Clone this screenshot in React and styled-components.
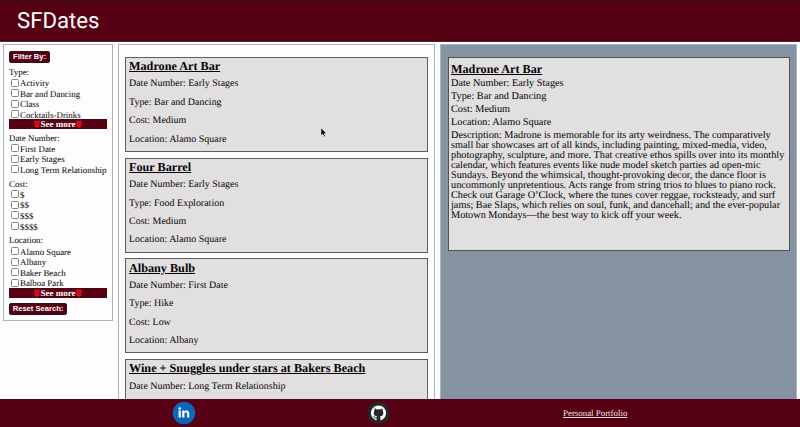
import React from "react";
import styled, { createGlobalStyle } from "styled-components";

const maroon = "#560013";

const GlobalStyle = createGlobalStyle`
  * { box-sizing: border-box; }
  body {
    margin: 0;
    overflow: hidden;
    background: #fdfdfd;
    color: #050304;
    font-family: "Liberation Serif", "Times New Roman", serif;
    text-rendering: geometricPrecision;
  }
`;

const Page = styled.div`
  display: flex;
  flex-direction: column;
  height: 427px;
  overflow: hidden;
`;

const Header = styled.header`
  flex: 0 0 42px;
  padding: 8px 17px 0;
  border-top: 1px solid #2b1820;
  border-bottom: 1px solid #4e2730;
  background: ${maroon};
`;

const Brand = styled.h1`
  margin: 0;
  color: #fff;
  font: 400 22.2px/24px Roboto, sans-serif;
`;

const Main = styled.main`
  flex: 1;
  min-height: 0;
  display: grid;
  grid-template-columns: 110px 317px 357px;
  column-gap: 5px;
  padding: 2px 3px 0;
`;

const Sidebar = styled.aside`
  align-self: start;
  height: 277px;
  padding: 6px 5px;
  border: 1px solid #a9b4c2;
`;

const FilterButton = styled.button`
  display: block;
  width: ${(p) => p.$width}px;
  height: 12px;
  padding: 0;
  border: 1px solid #35121c;
  border-radius: 2px;
  background: ${maroon};
  color: #fff;
  font: 700 7.6px/10px "Liberation Sans", Arial, sans-serif;
  white-space: nowrap;
`;

const Group = styled.section`
  margin-top: ${(p) => p.$gap}px;
  font-size: 8.88px;
`;

const GroupTitle = styled.div`
  height: 10px;
  line-height: 9px;
`;

const Option = styled.label`
  display: flex;
  align-items: center;
  height: 10.55px;
  padding-left: 2px;
  line-height: 10px;
  white-space: nowrap;
`;

const Checkbox = styled.input`
  appearance: none;
  flex: none;
  width: 8px;
  height: 8px;
  margin: 0 1px 1px 0;
  border: 1px solid #858585;
  border-radius: 1.5px;
  background: #fff;
`;

const SeeMore = styled.div`
  display: flex;
  align-items: center;
  justify-content: center;
  width: 98px;
  height: 10px;
  margin-top: -1px;
  background: ${maroon};
  color: #fff;
  font-weight: 700;
  font-size: 9px;
  line-height: 10px;
`;

const List = styled.section`
  display: flex;
  flex-direction: column;
  gap: 5.7px;
  min-height: 0;
  overflow: hidden;
  padding: 12px 6px 0;
  border: 1px solid #a9b4c2;
  border-bottom: 0;
`;

const Card = styled.article`
  flex: 0 0 95px;
  padding: 1.4px 3px;
  border: 1px solid #5e5e60;
  background: #e1dfe0;
`;

const Title = styled.h2`
  margin: 0;
  font-size: 12.2px;
  line-height: 14px;
  text-decoration: underline;
  text-decoration-thickness: 1px;
  white-space: nowrap;
`;

const Facts = styled.div`
  padding-top: ${(p) => p.$top}px;
  font-size: ${(p) => p.$size}px;
  line-height: ${(p) => p.$line}px;
`;

const DetailPanel = styled.section`
  padding: 12px 6px 0 7px;
  border: 1px solid #a9b4c2;
  border-bottom: 0;
  background: #8592a2;
`;

const Detail = styled.article`
  height: 194px;
  padding: 4.4px 2px;
  border: 1px solid #4f535a;
  background: #e1dfe0;
`;

const Description = styled.p`
  margin: 1px 0 0;
  font-size: 10.27px;
  line-height: 10.05px;
  white-space: pre;
`;

const Footer = styled.footer`
  flex: 0 0 28px;
  display: grid;
  grid-template-columns: 366px 25px 172px 1fr;
  align-items: center;
  background: ${maroon};
`;

const LinkedInLink = styled.a`
  display: block;
  padding-left: 172px;
  height: 24px;
`;

const GitHubLink = styled.a`
  display: block;
  height: 24px;
`;

const PortfolioLink = styled.a`
  grid-column: 4;
  color: #efe2e5;
  font-size: 8.9px;
  line-height: 12px;
`;

const Pointer = styled.svg`
  position: absolute;
  left: 320px;
  top: 127px;
`;

const Chevrons = () => (
  <svg width="6" height="8" viewBox="0 0 6 8" fill="none" stroke="#f01118" strokeWidth="1.5">
    <path d="M.3 .8 3 2.5 5.7.8M.3 3.1 3 4.8 5.7 3.1M.7 5.3 3 7 5.3 5.3" />
  </svg>
);

const groups = [
  { title: "Type:", gap: 5, options: ["Activity", "Bar and Dancing", "Class", "Cocktails-Drinks"], more: true },
  { title: "Date Number:", gap: 4.4, options: ["First Date", "Early Stages", "Long Term Relationship"] },
  { title: "Cost:", gap: 4.4, options: ["$", "$$", "$$$", "$$$$"] },
  { title: "Location:", gap: 4.6, options: ["Alamo Square", "Albany", "Baker Beach", "Balboa Park"], more: true },
];

const dates = [
  { name: "Madrone Art Bar", stage: "Early Stages", type: "Bar and Dancing", cost: "Medium", place: "Alamo Square" },
  { name: "Four Barrel", stage: "Early Stages", type: "Food Exploration", cost: "Medium", place: "Alamo Square" },
  { name: "Albany Bulb", stage: "First Date", type: "Hike", cost: "Low", place: "Albany" },
  { name: "Wine + Snuggles under stars at Bakers Beach", stage: "Long Term Relationship" },
];

const description = `Description: Madrone is memorable for its arty weirdness. The comparatively
small bar showcases art of all kinds, including painting, mixed-media, video,
photography, sculpture, and more. That creative ethos spills over into its monthly
calendar, which features events like nude model sketch parties ad open-mic
Sundays. Beyond the whimsical, thought-provoking decor, the dance floor is
uncommonly unpretentious. Acts range from string trios to blues to piano rock.
Check out Garage O’Clock, where the tunes cover reggae, rocksteady, and surf
jams; Bae Slaps, which relies on soul, funk, and dancehall; and the ever-popular
Motown Mondays—the best way to kick off your week.`;

function DateFacts({ date, ...layout }) {
  return (
    <Facts {...layout}>
      <div>Date Number: {date.stage}</div>
      {date.type && <div>Type: {date.type}</div>}
      {date.cost && <div>Cost: {date.cost}</div>}
      {date.place && <div>Location: {date.place}</div>}
    </Facts>
  );
}

export default function App() {
  return (
    <Page>
      <GlobalStyle />
      <Header><Brand>SFDates</Brand></Header>
      <Main>
        <Sidebar>
          <FilterButton $width={41}>Filter By:</FilterButton>
          {groups.map((g) => (
            <Group key={g.title} $gap={g.gap}>
              <GroupTitle>{g.title}</GroupTitle>
              {g.options.map((o) => (
                <Option key={o}><Checkbox type="checkbox" />{o}</Option>
              ))}
              {g.more && <SeeMore><Chevrons />See more<Chevrons /></SeeMore>}
            </Group>
          ))}
          <Group $gap={5}><FilterButton $width={58}>Reset Search:</FilterButton></Group>
        </Sidebar>
        <List>
          {dates.map((d) => (
            <Card key={d.name}>
              <Title>{d.name}</Title>
              <DateFacts date={d} $top={2.1} $size={9.97} $line={18.35} />
            </Card>
          ))}
        </List>
        <DetailPanel>
          <Detail>
            <Title>{dates[0].name}</Title>
            <DateFacts date={dates[0]} $top={2} $size={10.27} $line={12.8} />
            <Description>{description}</Description>
          </Detail>
        </DetailPanel>
      </Main>
      <Footer>
        <LinkedInLink href="#" aria-label="LinkedIn">
          <svg width="24" height="24" viewBox="0 0 24 24">
            <circle cx="12" cy="12" r="11.2" fill="#0b66bc" />
            <g fill="#fff">
              <circle cx="7.7" cy="7.5" r="1.3" />
              <path d="M6.6 9.6h2.2v6.8H6.6zM10.2 9.6h2.1v1c.4-.7 1.1-1.2 2.2-1.2 2 0 2.8 1.3 2.8 3.3v3.7h-2.2v-3.4c0-1-.3-1.7-1.2-1.7-1 0-1.5.7-1.5 1.8v3.3h-2.2z" />
            </g>
          </svg>
        </LinkedInLink>
        <GitHubLink href="#" aria-label="GitHub">
          <svg width="24" height="24" viewBox="0 0 24 24">
            <circle cx="12.5" cy="12" r="11" fill="#25272a" />
            <g transform="translate(5 4.5) scale(.94)">
              <path fill="#fff" d="M8 0C3.58 0 0 3.58 0 8c0 3.54 2.29 6.53 5.47 7.59.4.07.55-.17.55-.38v-1.49c-2.01.37-2.53-.49-2.69-.94-.09-.23-.48-.94-.82-1.13-.28-.15-.68-.52-.01-.53.63-.01 1.08.58 1.23.82.72 1.21 1.87.87 2.33.66.07-.52.28-.87.51-1.07-1.78-.2-3.64-.89-3.64-3.95 0-.87.31-1.59.82-2.15-.08-.2-.36-1.02.08-2.12 0 0 .67-.21 2.2.82A7.65 7.65 0 0 1 8 3.87c.68 0 1.36.09 2 .26 1.53-1.04 2.2-.82 2.2-.82.44 1.1.16 1.92.08 2.12.51.56.82 1.27.82 2.15 0 3.07-1.87 3.75-3.65 3.95.29.25.54.73.54 1.48v2.2c0 .21.15.46.55.38A8 8 0 0 0 16 8c0-4.42-3.58-8-8-8z" />
            </g>
          </svg>
        </GitHubLink>
        <PortfolioLink href="#">Personal Portfolio</PortfolioLink>
      </Footer>
      <Pointer width="8" height="12" viewBox="0 0 8 12">
        <path d="M1 1v7.6l1.8-1.5 1.3 2.8 1.2-.6-1.2-2.7h2.4z" fill="#080808" stroke="#eee" strokeWidth=".5" />
      </Pointer>
    </Page>
  );
}
